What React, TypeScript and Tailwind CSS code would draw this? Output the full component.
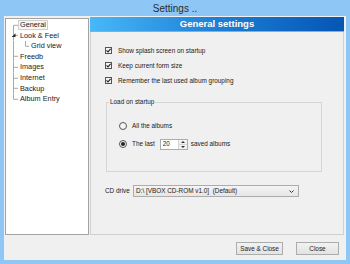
import React from 'react';

type TreeItem = { label: string; level: 0 | 1; selected?: boolean; expander?: boolean; first?: boolean; last?: boolean };

const treeItems: TreeItem[] = [
  { label: 'General', level: 0, selected: true, first: true },
  { label: 'Look & Feel', level: 0, expander: true },
  { label: 'Grid view', level: 1 },
  { label: 'Freedb', level: 0 },
  { label: 'Images', level: 0 },
  { label: 'Internet', level: 0 },
  { label: 'Backup', level: 0 },
  { label: 'Album Entry', level: 0, last: true },
];

const TreeRow: React.FC<{ item: TreeItem }> = ({ item }) => {
  const w = item.level === 0 ? 12 : 23;
  const h = 10.6;
  const mid = h / 2;
  return (
    <div className="flex h-[10.6px] items-center">
      <svg width={w} height={h} className="shrink-0">
        <line
          x1={7.5}
          y1={item.first ? mid : 0}
          x2={7.5}
          y2={item.last ? mid : h}
          stroke="#a8a8a8"
          strokeWidth={1}
        />
        {item.level === 0 ? (
          <line x1={7.5} y1={mid} x2={12} y2={mid} stroke="#a8a8a8" />
        ) : (
          <>
            <line x1={19.5} y1={0} x2={19.5} y2={mid} stroke="#a8a8a8" />
            <line x1={19.5} y1={mid} x2={23} y2={mid} stroke="#a8a8a8" />
          </>
        )}
        {item.expander && <polygon points="9.5,3.2 9.5,7 5.7,7" fill="#262626" />}
      </svg>
      <span
        className={
          'px-[1px] leading-[8px] border ' +
          (item.selected ? 'border-[#cfcfcf] bg-[#f7f7f7]' : 'border-transparent')
        }
      >
        {item.label}
      </span>
    </div>
  );
};

const CheckBox: React.FC = () => (
  <span className="flex h-[7px] w-[7px] items-center justify-center border border-[#555] bg-[#f4f4f4]">
    <svg width="5" height="5" viewBox="0 0 5 5">
      <path d="M0.5 2.4 L2 3.9 L4.6 0.8" fill="none" stroke="#222" strokeWidth="1.1" />
    </svg>
  </span>
);

const Radio: React.FC<{ checked?: boolean }> = ({ checked }) => (
  <span className="flex h-[8px] w-[8px] items-center justify-center rounded-full border border-[#555] bg-[#f6f6f6]">
    {checked && <span className="h-[4px] w-[4px] rounded-full bg-[#222]" />}
  </span>
);

export default function App() {
  return (
    <div className="flex h-[264px] w-[350px] flex-col bg-[#8ec7f6] font-['Liberation_Sans',Arial,sans-serif] text-[#1a1a1a]">
      <div className="flex h-[16px] items-center justify-center text-[10px] text-[#2b2b2b]">Settings ..</div>
      <div className="mx-[4px] mb-[4px] flex flex-1 flex-col bg-[#f0f0f0]">
        <div className="flex h-[219px]">
          {/* tree */}
          <div className="ml-[1px] mt-[2px] h-[217px] w-[84px] border border-[#a3a3a3] bg-white pt-[0.7px] text-[7.3px]">
            {treeItems.map((it) => (
              <TreeRow key={it.label} item={it} />
            ))}
          </div>

          {/* right panel */}
          <div className="ml-[1px] mt-[1px] flex w-[254px] flex-col">
            <div className="flex h-[15px] items-center justify-center bg-gradient-to-r from-[#48b8f7] via-[#1c7fd6] to-[#0656b4] text-[9.5px] font-bold text-white shadow-[inset_0_-1px_0_#6fb4ee]">
              General settings
            </div>
            <div className="flex flex-1 flex-col border border-t-0 border-[#d0d0d0] pl-[14px] pt-[11px] text-[6.4px]">
              {['Show splash screen on startup', 'Keep current form size', 'Remember the last used album grouping'].map(
                (t) => (
                  <div key={t} className="flex h-[15px] items-center gap-[6px]">
                    <CheckBox />
                    <span>{t}</span>
                  </div>
                )
              )}

              <div className="relative ml-[1px] mt-[14px] h-[70px] w-[216px] border border-[#d5d5d5] pl-[12px] pt-[14px]">
                <span className="absolute left-[2px] top-[-5px] bg-[#f0f0f0] px-[1px] leading-[8px]">Load on startup</span>
                <div className="flex h-[18px] items-center gap-[5px]">
                  <Radio />
                  <span>All the albums</span>
                </div>
                <div className="flex h-[18px] items-center">
                  <Radio checked />
                  <span className="ml-[5px]">The last</span>
                  <span className="ml-[5px] flex h-[11px] w-[28px] items-stretch border border-[#abadb3] bg-white">
                    <span className="flex flex-1 items-center pl-[2px]">20</span>
                    <span className="flex w-[9px] flex-col border-l border-[#d6d6d6] bg-[#f2f2f2]">
                      <span className="flex flex-1 items-center justify-center border-b border-[#d6d6d6]">
                        <svg width="4" height="2" viewBox="0 0 4 2"><path d="M0 2 L2 0 L4 2 Z" fill="#333" /></svg>
                      </span>
                      <span className="flex flex-1 items-center justify-center">
                        <svg width="4" height="2" viewBox="0 0 4 2"><path d="M0 0 L2 2 L4 0 Z" fill="#333" /></svg>
                      </span>
                    </span>
                  </span>
                  <span className="ml-[3px]">saved albums</span>
                </div>
              </div>

              <div className="mt-[13px] flex h-[12px] items-center">
                <span className="w-[28px]">CD drive</span>
                <div className="flex h-[12px] w-[166px] items-center justify-between border border-[#acacac] bg-gradient-to-b from-[#f4f4f4] to-[#e6e6e6] pl-[2px] pr-[4px]">
                  <span className="whitespace-pre">{'D:\\ [VBOX CD-ROM v1.0]  (Default)'}</span>
                  <svg width="5" height="3" viewBox="0 0 5 3">
                    <path d="M0.5 0.5 L2.5 2.5 L4.5 0.5" fill="none" stroke="#333" strokeWidth="1" />
                  </svg>
                </div>
              </div>
            </div>
          </div>
        </div>

        {/* buttons */}
        <div className="flex flex-1 items-start justify-end gap-[13px] pr-[7px] pt-[7px] text-[6.4px]">
          <button className="flex h-[13px] w-[47px] items-center justify-center border border-[#acacac] bg-gradient-to-b from-[#f2f2f2] to-[#e3e3e3]">
            Save &amp; Close
          </button>
          <button className="flex h-[13px] w-[43px] items-center justify-center border border-[#acacac] bg-gradient-to-b from-[#f2f2f2] to-[#e3e3e3]">
            Close
          </button>
        </div>
      </div>
    </div>
  );
}
